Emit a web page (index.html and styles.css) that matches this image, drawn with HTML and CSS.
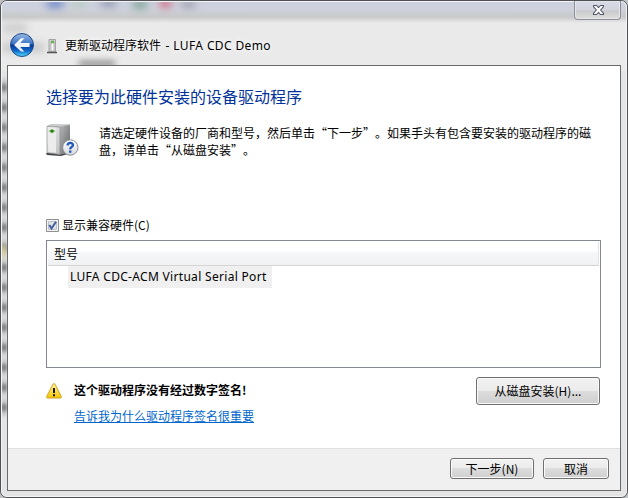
FILE: index.html
```html
<!DOCTYPE html>
<html lang="zh-CN">
<head>
<meta charset="utf-8">
<title>更新驱动程序软件</title>
<link rel="stylesheet" href="styles.css">
</head>
<body>
<div class="window">
  <div class="glass" aria-hidden="true">
    <i class="smudge s1"></i><i class="smudge s2"></i><i class="smudge s3"></i><i class="smudge s4"></i><i class="smudge s5"></i><i class="smudge s6"></i><i class="smudge s7"></i><i class="smudge s8"></i><i class="smudge s9"></i>
    <i class="edge"></i><i class="smudge s10"></i>
  </div>
  <button class="close" aria-label="关闭">
    <svg width="13" height="12" viewBox="0 0 13 12"><path d="M1.5 1.5H4.6L6.5 3.6 8.4 1.5H11.5V2.6L8.6 6 11.5 9.3V10.5H8.4L6.5 8.4 4.6 10.5H1.5V9.3L4.4 6 1.5 2.6Z" fill="#fff" stroke="#53576a" stroke-width="1.1" stroke-linejoin="round"/></svg>
  </button>
  <header class="titlebar">
    <svg class="back" width="26" height="26" viewBox="0 0 26 26">
      <defs>
        <linearGradient id="orb" x1="0" y1="0" x2="0" y2="1"><stop offset="0" stop-color="#99b9e4"/><stop offset=".45" stop-color="#3c75c6"/><stop offset=".5" stop-color="#073796"/><stop offset=".75" stop-color="#1167c8"/><stop offset="1" stop-color="#50e1ff"/></linearGradient>
        <linearGradient id="arrow" x1="0" y1="0" x2="0" y2="1"><stop offset="0" stop-color="#fff"/><stop offset="1" stop-color="#dfe9f8"/></linearGradient>
      </defs>
      <circle cx="13" cy="13" r="12.5" fill="#e1e8f2"/>
      <circle cx="13" cy="13" r="11.5" fill="url(#orb)" stroke="#24477f"/>
      <path d="M5 13 12 6.2H15.3L11.2 11.1H20.6V14.9H11.2L15.3 19.6H12Z" fill="url(#arrow)"/>
    </svg>
    <svg class="device" width="12" height="16" viewBox="0 0 12 16">
      <path d="M2 14V1.5H8.5V14Z" fill="#d5d6d6" stroke="#a2a3a3"/>
      <path d="M4 3H7V13H4Z" fill="#f7f8f7" stroke="#999" stroke-width=".6"/>
      <path d="M4 3.4 6 2.5 7 3.4V5.2H4Z" fill="#67b344"/>
      <path d="M0 14.5H10" stroke="#555" stroke-width="1.3"/>
    </svg>
    <div class="caption">更新驱动程序软件<span class="caption-device"> - LUFA CDC Demo</span></div>
  </header>
  <main class="client">
    <section class="page">
      <h1>选择要为此硬件安装的设备驱动程序</h1>
      <div class="intro">
        <svg width="34" height="34" viewBox="0 0 34 34">
          <defs>
            <linearGradient id="side" x1="0" y1="0" x2="1" y2="1"><stop offset="0" stop-color="#b6b7b9"/><stop offset="1" stop-color="#626466"/></linearGradient>
            <linearGradient id="front" x1="0" y1="0" x2="1" y2="1"><stop offset="0" stop-color="#fafafa"/><stop offset="1" stop-color="#b8babc"/></linearGradient>
            <linearGradient id="badge" x1="0" y1="0" x2="0" y2="1"><stop offset="0" stop-color="#fff"/><stop offset="1" stop-color="#d5d8dc"/></linearGradient>
          </defs>
          <path d="M0 29.5 3 27.5 18 29.5 25 27V29L15 32 1 31Z" fill="#3f4142"/>
          <path d="M1 2.5 4.5 .7 24 .9 14 3.2Z" fill="#d5d6d7" stroke="#949698" stroke-width=".6"/>
          <path d="M14 3 24 .9V27L14 31Z" fill="url(#side)"/>
          <path d="M1 2.5 14 3V30.5L1 28.8Z" fill="url(#front)" stroke="#8b8d8f" stroke-width=".7"/>
          <path d="M2.2 3.5 10 3.8V28.7L2.2 27.6Z" fill="#ececec"/>
          <path d="M2 7 6 5 10 7 6 9.4Z" fill="#a2cd90"/><ellipse cx="6" cy="7" rx="1.8" ry="1.5" fill="#238316"/>
          <circle cx="24.3" cy="23.5" r="7.7" fill="url(#badge)" stroke="#888d94"/>
          <path d="M21.6 21.5C21.7 17.7 27.3 18.3 26.9 21.4 26.6 23 24.3 23 24.2 25.3M24.2 26.5V28.8" fill="none" stroke="#2358bd" stroke-width="2.4"/>
        </svg>
        <p>请选定硬件设备的厂商和型号，然后单击“下一步”。如果手头有包含要安装的驱动程序的磁盘，请单击“从磁盘安装”。</p>
      </div>
      <label class="compatible">
        <svg width="13" height="13" viewBox="0 0 13 13"><path d="M.5.5H12.5V12.5H.5Z" fill="#f4f4f4" stroke="#8e8f8f"/><path d="M2.5 2.5H10.5V10.5H2.5Z" fill="#dfe3e8" stroke="#bac2ca"/><path d="M3.3 6 5.5 9.5 10 2.8" fill="none" stroke="#425d9c" stroke-width="2"/></svg>
        <span>显示兼容硬件(C)</span>
      </label>
      <div class="models">
        <div class="models-head">型号</div>
        <div class="model">LUFA CDC-ACM Virtual Serial Port</div>
      </div>
      <div class="signature">
        <svg width="16" height="16" viewBox="0 0 16 16">
          <defs><linearGradient id="warn" x1="0" y1="0" x2="0" y2="1"><stop offset="0" stop-color="#fff6a0"/><stop offset="1" stop-color="#f6c500"/></linearGradient></defs>
          <path d="M7 1.2Q8 0 9 1.2L15.3 13.5Q15.7 14.9 14.5 15H1.5Q.3 14.9.7 13.5Z" fill="url(#warn)" stroke="#caa321"/>
          <path d="M8 5V10M8 11.3V13.2" stroke="#171717" stroke-width="2"/>
        </svg>
        <div class="notice"><strong>这个驱动程序没有经过数字签名!</strong><a href="#">告诉我为什么驱动程序签名很重要</a></div>
        <button class="button disk">从磁盘安装(H)...</button>
      </div>
    </section>
    <footer><button class="button next">下一步(N)</button><button class="button cancel">取消</button></footer>
  </main>
</div>
</body>
</html>
```
FILE: styles.css
```css
* { box-sizing: border-box; }
body {
  margin: 0;
  width: 628px;
  height: 498px;
  overflow: hidden;
  background: #bfc2c5;
  color: #000;
  font: 12px/17px "Noto Sans CJK SC", sans-serif;
  text-spacing-trim: space-all;
}
.window {
  position: relative;
  width: 628px;
  height: 498px;
  padding: 0 6px 6px;
  overflow: hidden;
  border: 1px solid #505154;
  border-radius: 7px;
  background: #e4e4e4;
}
.glass {
  position: absolute;
  inset: 0;
  border-radius: 6px;
  background: linear-gradient(#ccd1e0 0, #cfd2dc 8px, #c8c9c8 16px, #eaeaea 22px, #eaeaea 70px, transparent 70px);
}
.glass::after {
  content: "";
  position: absolute;
  inset: 0;
  border: 1px solid #f4f4f4;
  border-radius: 6px;
}
.edge {
  position: absolute;
  left: 0;
  top: 76px;
  width: 6px;
  height: 340px;
  background: repeating-linear-gradient(#dcdcdc 0, #c8c8c8 5px, #858585 9px, #858585 12px, #c8c8c8 16px, #dcdcdc 20px);
  filter: blur(1px);
}
.smudge { position: absolute; filter: blur(4px); }
.s1 { left: 46px; top: -1px; width: 16px; height: 7px; background: #5876be; }
.s2 { left: 72px; top: 0; width: 12px; height: 5px; background: #a8c8aa; }
.s3 { left: 100px; top: -1px; width: 15px; height: 6px; background: #8187a2; }
.s4 { left: 132px; top: 0; width: 14px; height: 7px; background: #6f9b87; }
.s5 { left: 159px; top: -1px; width: 11px; height: 7px; background: #cf536c; }
.s6 { left: 181px; top: 0; width: 13px; height: 6px; background: #8e8e9d; }
.s7 { left: 2px; top: 23px; width: 24px; height: 8px; background: #c6c6c6; }
.s8 { left: 1px; top: 43px; width: 42px; height: 7px; background: #bcbcbc; }
.s9 { left: 78px; top: 60px; width: 36px; height: 5px; background: #808080; filter: blur(3px); }
.s10 { left: 0; top: 244px; width: 5px; height: 12px; background: #d8cf9c; filter: blur(2px); }
.close {
  position: absolute;
  top: 0;
  right: 6px;
  display: flex;
  align-items: center;
  justify-content: center;
  width: 47px;
  height: 19px;
  padding: 0 0 0 1px;
  border: 1px solid #8e9198;
  border-top: 0;
  border-radius: 0 0 4px 4px;
  background: linear-gradient(#d9dce7, #d1d4dc 50%, #c9cacc 55%, #dedede);
  box-shadow: inset 0 0 0 1px #e4e5e9;
}
.titlebar {
  position: relative;
  display: flex;
  align-items: center;
  height: 64px;
  padding: 24px 0 0 2px;
}
.device { margin: 1px 0 0 12px; }
.caption { margin: -1px 0 0 6px; white-space: pre; text-shadow: 0 0 5px #fff, 0 0 8px #fff; }
.caption-device, .model { font-family: "Noto Sans", sans-serif; }
.caption-device { margin-left: 1px; letter-spacing: .38px; }
.client {
  position: relative;
  display: flex;
  flex-direction: column;
  width: 614px;
  height: 426px;
  border: 1px solid #67696c;
  background: #fff;
}
.page { flex: 1; padding: 18px 20px 0 38px; }
h1 { margin: 0; color: #003399; font-size: 16px; line-height: 24px; font-weight: 400; }
.intro { display: flex; height: 38px; margin-top: 16px; }
.intro svg { flex: none; }
.intro p { width: 494px; margin: 0 0 0 19px; }
.compatible { display: flex; align-items: center; gap: 3px; height: 17px; margin-top: 55px; }
.compatible span { margin-top: -2px; }
.models { width: 555px; height: 128px; margin-top: 6px; padding: 1px; border: 1px solid #828790; }
.models-head {
  height: 24px;
  padding: 3px 6px 0;
  border-right: 1px solid #e4e4e6;
  border-bottom: 1px solid #d5d5d5;
  background: linear-gradient(#fff 0, #fff 9px, #f7f8fa 10px, #f0f1f3);
}
.model { width: 204px; height: 22px; margin-left: 20px; padding-left: 2px; line-height: 22px; background: #f0f0f0; letter-spacing: .31px; white-space: nowrap; }
.signature { display: flex; height: 60px; margin-top: 9px; }
.signature > svg { margin-top: 6px; }
.notice { display: flex; flex-direction: column; gap: 9px; margin: 4px 0 0 12px; }
a { color: #0066cc; text-underline-offset: 1px; }
.button {
  padding: 0 0 1px;
  border: 1px solid #707070;
  border-radius: 3px;
  background: linear-gradient(#f2f2f2, #ebebeb 49%, #dddddd 50%, #cfcfcf);
  box-shadow: inset 0 0 0 1px #fafafa;
  color: #000;
  font: inherit;
}
.disk { width: 124px; height: 28px; margin-left: auto; }
footer {
  display: flex;
  justify-content: flex-end;
  gap: 9px;
  height: 42px;
  padding: 9px 11px 0 0;
  border-top: 1px solid #dfdfdf;
  background: #f0f0f0;
}
footer .button { height: 21px; }
.next { width: 84px; }
.cancel { width: 66px; }
```
